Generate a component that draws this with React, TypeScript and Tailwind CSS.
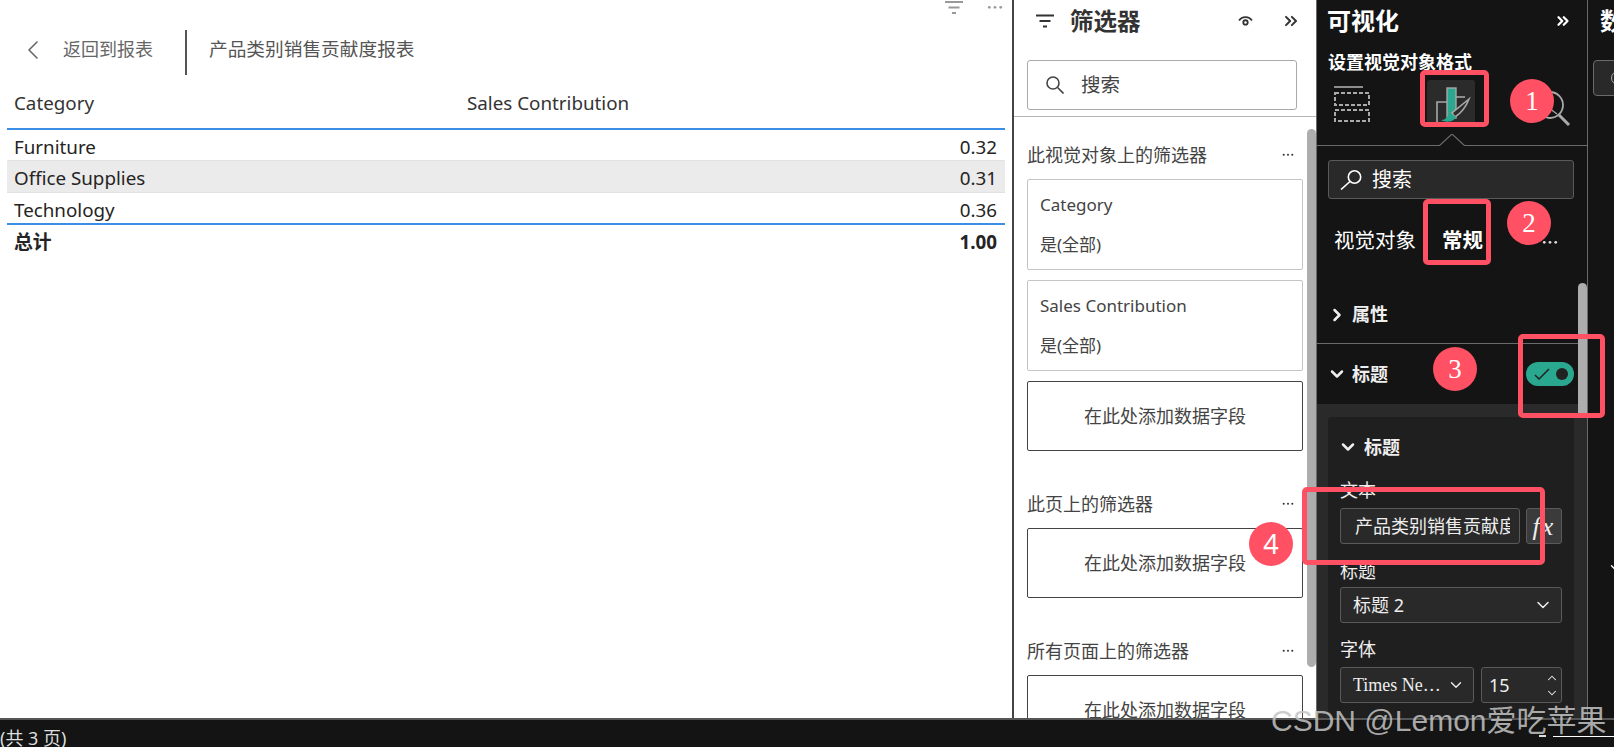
import { ChevronDown, ChevronLeft, ChevronRight, ChevronUp, ChevronsRight } from "lucide-react";

const sans = "font-['Noto_Sans','Noto_Sans_CJK_SC',sans-serif]";

function FilterLines({ className }: { className: string }) {
    return (
        <svg viewBox="0 0 18 14" className={className} fill="none" stroke="currentColor" strokeWidth="1.8">
            <path d="M0 1.5h18M3.5 7h11M7 12.5h4" />
        </svg>
    );
}

function Dots({ className }: { className: string }) {
    return (
        <svg viewBox="0 0 14 4" className={className} fill="currentColor">
            <circle cx="2" cy="2" r="1.2" />
            <circle cx="7" cy="2" r="1.2" />
            <circle cx="12" cy="2" r="1.2" />
        </svg>
    );
}

function FilterHeading({ label, className }: { label: string; className: string }) {
    return (
        <div className={`flex h-[24px] items-center justify-between pr-[22px] text-[18px] leading-[24px] text-[#444] ${className}`}>
            <span>{label}</span>
            <Dots className="w-[12px] text-[#333]" />
        </div>
    );
}

function DropField({ className = "" }: { className?: string }) {
    return (
        <div className={`flex h-[70px] w-[276px] shrink-0 items-center justify-center rounded-[2px] border border-[#444] text-[18px] text-[#444] ${className}`}>
            在此处添加数据字段
        </div>
    );
}

function FilterCard({ label }: { label: string }) {
    return (
        <div className="mb-[10px] h-[91px] w-[276px] rounded-[2px] border border-[#c4c4c4] pl-[12px] pt-[12px] text-[#444]">
            <div className="h-[40px] text-[17px] leading-[26px]">{label}</div>
            <div className="text-[17px] leading-[26px]">是(全部)</div>
        </div>
    );
}

function Field({ children, className }: { children: React.ReactNode; className: string }) {
    return (
        <div className={`flex h-[36px] items-center rounded-[3px] border border-[#5a5a5a] bg-[#292929] text-[#eee] ${className}`}>
            {children}
        </div>
    );
}

function Marker({ n, className }: { n: string; className: string }) {
    return (
        <div className={`absolute flex h-[44px] w-[44px] items-center justify-center rounded-full bg-[#ff5064] font-['Liberation_Serif',serif] text-[27px] text-white ${className}`}>
            {n}
        </div>
    );
}

function Frame({ className }: { className: string }) {
    return <div className={`absolute rounded-[5px] border-[5px] border-[#ff5064] ${className}`} />;
}

export default function App() {
    return (
        <div className={`relative flex h-[747px] w-[1614px] flex-col overflow-hidden bg-white ${sans}`}>
            <div className="flex h-[718px] shrink-0">
                {/* report canvas */}
                <div className="relative w-[1014px] shrink-0 border-r-2 border-[#444] bg-white">
                    <div className="absolute right-[9px] top-0 flex items-center gap-[24px] text-[#999]">
                        <FilterLines className="h-[15px] w-[18px]" />
                        <Dots className="w-[16px]" />
                    </div>
                    <div className="flex h-[101px] items-center pb-[2px] pl-[17px]">
                        <ChevronLeft className="h-[32px] w-[32px] text-[#666]" strokeWidth={1.2} />
                        <span className="ml-[14px] w-[122px] text-[18px] text-[#666]">返回到报表</span>
                        <div className="mt-[6px] h-[45px] w-[2px] bg-[#555]" />
                        <span className="ml-[22px] text-[18.7px] text-[#555]">产品类别销售贡献度报表</span>
                    </div>
                    <div className="ml-[7px] w-[998px] text-[18.8px] text-[#252423]">
                        <div className="grid h-[27px] grid-cols-[453px_1fr] pl-[7px] text-[#333]">
                            <span className="leading-[4px]">Category</span>
                            <span className="leading-[4px]">Sales Contribution</span>
                        </div>
                        <div className="h-[2px] bg-[#3a8ee6]" />
                        <div className="flex h-[30px] items-center justify-between pl-[7px] pr-[8px] pt-[4px]">
                            <span>Furniture</span>
                            <span>0.32</span>
                        </div>
                        <div className="flex h-[33px] items-center justify-between border-y border-[#e2e2e2] bg-[#ebebeb] pl-[7px] pr-[8px] pt-[3px]">
                            <span>Office Supplies</span>
                            <span>0.31</span>
                        </div>
                        <div className="flex h-[30px] items-center justify-between pl-[7px] pr-[8px] pt-[4px]">
                            <span>Technology</span>
                            <span>0.36</span>
                        </div>
                        <div className="h-[2px] bg-[#3a8ee6]" />
                        <div className="flex h-[33px] items-center justify-between pl-[7px] pr-[8px] pt-[2px] font-bold">
                            <span>总计</span>
                            <span>1.00</span>
                        </div>
                    </div>
                </div>

                {/* filter pane */}
                <div className="relative w-[302px] shrink-0 overflow-hidden bg-white">
                    <div className="flex h-[42px] items-center pl-[22px]">
                        <FilterLines className="h-[14px] w-[18px] text-[#333]" />
                        <span className="ml-[16px] text-[23.5px] font-bold leading-[40px] text-[#333]">筛选器</span>
                        <svg viewBox="0 0 16 12" className="ml-[97px] h-[11px] w-[15px] text-[#333]" fill="none" stroke="currentColor" strokeWidth="2">
                            <path d="M1 5c3-5 11-5 14 0" />
                            <circle cx="8" cy="7" r="2.4" />
                        </svg>
                        <ChevronsRight className="ml-[28px] h-[20px] w-[20px] text-[#333]" strokeWidth={2.4} />
                    </div>
                    <div className="mx-[13px] mt-[18px] flex h-[50px] w-[270px] items-center rounded-[3px] border border-[#aaa] pl-[18px] text-[#444]">
                        <svg viewBox="0 0 18 18" className="h-[18px] w-[18px]" fill="none" stroke="currentColor" strokeWidth="1.6">
                            <circle cx="7" cy="7" r="6" />
                            <path d="M11.5 11.5 17.5 17.5" />
                        </svg>
                        <span className="ml-[17px] text-[19.5px]">搜索</span>
                    </div>
                    <div className="mt-[6px] h-px bg-[#b5b5b5]" />
                    <div className="pl-[13px] pt-[26px]">
                        <FilterHeading label="此视觉对象上的筛选器" className="mb-[12px]" />
                        <FilterCard label="Category" />
                        <FilterCard label="Sales Contribution" />
                        <DropField />
                        <FilterHeading label="此页上的筛选器" className="mb-[12px] mt-[41px]" />
                        <DropField />
                        <FilterHeading label="所有页面上的筛选器" className="mb-[12px] mt-[41px]" />
                        <DropField />
                    </div>
                    {/* scrollbar */}
                    <div className="absolute right-0 top-[129px] h-[538px] w-[9px] rounded-full bg-[#adadad]" />
                </div>

                {/* visualizations pane */}
                <div className="relative w-[272px] shrink-0 overflow-hidden border-x border-[#6b6b6b] bg-[#141414] text-white">
                    <div className="flex h-[42px] items-center justify-between pl-[10px] pr-[15px]">
                        <span className="text-[24px] font-bold">可视化</span>
                        <ChevronsRight className="h-[18px] w-[18px]" strokeWidth={3} />
                    </div>
                    <div className="mt-[10px] pl-[11px] text-[18px] font-bold leading-[20px]">设置视觉对象格式</div>
                    <div className="relative mt-[7px] h-[67px] border-b border-[#6b6b6b]">
                        {/* build visual icon */}
                        <svg viewBox="0 0 36 36" className="absolute left-[17px] top-[7px] h-[36px] w-[36px] text-[#aaa]" fill="none" stroke="currentColor">
                            <path d="M0 1h29" strokeWidth="1.6" />
                            <rect x="1" y="7" width="34" height="12" strokeWidth="2" strokeDasharray="4 2" />
                            <rect x="1" y="24" width="34" height="11" strokeWidth="2" strokeDasharray="4 2" />
                        </svg>
                        {/* format icon */}
                        <div className="absolute left-[110px] top-[1px] h-[46px] w-[48px] rounded-[3px] bg-[#2b2b2b]">
                            <svg viewBox="0 0 48 46" className="h-[46px] w-[48px]" fill="none">
                                <path d="M10 42V22h10" stroke="#a8a8a8" strokeWidth="1.6" />
                                <rect x="20" y="8" width="9" height="30" fill="#2aa78f" stroke="#a8a8a8" strokeWidth="1.4" />
                                <path d="M29 17h9" stroke="#a8a8a8" strokeWidth="1.6" />
                                <path d="M42 19 25 33l3 4c6-4 11-10 14-18z" fill="#2b2b2b" stroke="#a8a8a8" strokeWidth="1.6" />
                                <path d="M25 34c-2 0-4 1-5 3-1 2-3 3-6 3 5 3 13 2 15-3z" fill="#2aa78f" />
                            </svg>
                        </div>
                        {/* analytics icon */}
                        <svg viewBox="0 0 36 36" className="absolute left-[218px] top-[11px] h-[36px] w-[36px] text-[#aaa]" fill="none" stroke="currentColor" strokeWidth="1.8">
                            <circle cx="15" cy="15" r="13" />
                            <path d="M24 25l10 10" strokeWidth="3" />
                            <path d="M15 4l-4 22M6 12l16 12" strokeWidth="1.2" />
                        </svg>
                        <svg viewBox="0 0 26 12" className="absolute bottom-[-1px] left-[122px] h-[12px] w-[26px]" fill="none">
                            <path d="M0 12 13 0l13 12" fill="#141414" stroke="#6b6b6b" strokeWidth="1.2" />
                        </svg>
                    </div>
                    <div className="ml-[11px] mt-[14px] flex h-[39px] w-[246px] items-center rounded-[3px] border border-[#5a5a5a] bg-[#292929] pl-[11px]">
                        <svg viewBox="0 0 22 20" className="h-[20px] w-[22px]" fill="none" stroke="currentColor" strokeWidth="1.6">
                            <circle cx="14.5" cy="7" r="6.2" />
                            <path d="M10 11.5 1 19.5" />
                        </svg>
                        <span className="ml-[10px] text-[20px]">搜索</span>
                    </div>
                    <div className="mt-[21px] flex h-[40px] items-center pl-[17px] text-[20.5px]">
                        <span>视觉对象</span>
                        <span className="ml-[26px] font-bold">常规</span>
                        <Dots className="ml-[59px] mt-[4px] w-[16px] text-[#ddd]" />
                    </div>
                    <div className="mt-[40px] flex h-[29px] items-center pl-[10px] text-[18px] font-bold text-[#eee]">
                        <ChevronRight className="h-[20px] w-[20px]" strokeWidth={3} />
                        <span className="ml-[5px]">属性</span>
                    </div>
                    <div className="mt-[14px] h-px bg-[#6b6b6b]" />
                    <div className="flex h-[60px] items-center pl-[10px] text-[18px] font-bold text-[#eee]">
                        <ChevronDown className="h-[20px] w-[20px]" strokeWidth={3} />
                        <span className="ml-[5px]">标题</span>
                        {/* toggle */}
                        <div className="ml-[138px] flex h-[24px] w-[48px] items-center justify-between rounded-full bg-[#2aa78f] pl-[8px] pr-[6px]">
                            <svg viewBox="0 0 16 12" className="h-[12px] w-[16px] text-[#222]" fill="none" stroke="currentColor" strokeWidth="1.5">
                                <path d="M1 7l4 4L15 1" />
                            </svg>
                            <div className="h-[12px] w-[12px] rounded-full bg-[#222]" />
                        </div>
                    </div>
                    <div className="h-[314px] bg-[#2a2a2a] px-[11px] pt-[13px]">
                        <div className="h-[301px] w-[246px] rounded-t-[3px] bg-[#1f1f1f] pl-[12px]">
                            <div className="flex h-[60px] items-center text-[18px] font-bold text-[#eee]">
                                <ChevronDown className="-ml-[2px] h-[20px] w-[20px]" strokeWidth={3} />
                                <span className="ml-[6px]">标题</span>
                            </div>
                            <div className="mt-[1px] h-[24px] text-[18px] leading-[24px] text-[#eee]">文本</div>
                            <div className="mt-[6px] flex gap-[6px]">
                                <Field className="w-[180px] overflow-hidden pl-[14px] pr-[9px]">
                                    <span className="block w-full overflow-hidden whitespace-nowrap text-[18px]">产品类别销售贡献度报表</span>
                                </Field>
                                <div className="flex h-[36px] w-[36px] items-center justify-center rounded-[3px] border border-[#5a5a5a] bg-[#3b3b3b] font-['Liberation_Serif',serif] text-[26px] italic tracking-[2px] text-[#eee]">
                                    fx
                                </div>
                            </div>
                            <div className="mt-[15px] h-[24px] text-[18px] leading-[24px] text-[#eee]">标题</div>
                            <Field className="mt-[4px] w-[222px] justify-between pl-[12px] pr-[8px]">
                                <span className="text-[18px]">标题 2</span>
                                <ChevronDown className="h-[20px] w-[20px]" strokeWidth={1.8} />
                            </Field>
                            <div className="mt-[14px] h-[24px] text-[18px] leading-[24px] text-[#eee]">字体</div>
                            <div className="mt-[6px] flex gap-[7px]">
                                <Field className="w-[134px] justify-between pl-[12px] pr-[8px] font-['Liberation_Serif',serif]">
                                    <span className="text-[18px]">Times Ne…</span>
                                    <ChevronDown className="h-[18px] w-[18px]" strokeWidth={1.8} />
                                </Field>
                                <Field className="w-[81px] justify-between pl-[7px] pr-[2px]">
                                    <span className="text-[18px]">15</span>
                                    <div className="flex flex-col gap-[1px]">
                                        <ChevronUp className="h-[14px] w-[14px]" strokeWidth={1.8} />
                                        <ChevronDown className="h-[14px] w-[14px]" strokeWidth={1.8} />
                                    </div>
                                </Field>
                            </div>
                        </div>
                    </div>
                    {/* scrollbar */}
                    <div className="absolute right-0 top-[283px] h-[130px] w-[9px] rounded-t-full bg-[#adadad]" />
                </div>

                {/* data pane */}
                <div className="relative w-[26px] shrink-0 overflow-hidden bg-[#141414] text-white">
                    <div className="flex h-[42px] items-center whitespace-nowrap pl-[12px] text-[24px] font-bold">数据</div>
                    <div className="ml-[5px] mt-[18px] flex h-[36px] w-[60px] items-center rounded-[4px] border border-[#6b6b6b] bg-[#292929] pl-[17px]">
                        <div className="h-[14px] w-[14px] shrink-0 rounded-full border-[1.5px] border-[#aaa]" />
                    </div>
                    <ChevronDown className="absolute left-[19px] top-[559px] h-[18px] w-[18px]" strokeWidth={1.8} />
                </div>
            </div>

            {/* status bar */}
            <div className="h-[29px] overflow-hidden border-t-2 border-[#555] bg-[#141414] text-[18px] leading-[36px] text-[#ddd]">
                (共 3 页)
                <div className="absolute left-[1539px] top-[735px] h-[2px] w-[7px] bg-[#ddd]" />
                <div className="absolute left-[1553px] top-[736px] h-px w-[61px] bg-white" />
            </div>

            {/* annotations */}
            <Frame className="left-[1420px] top-[70px] h-[57px] w-[69px]" />
            <Frame className="left-[1423px] top-[199px] h-[66px] w-[68px]" />
            <Frame className="left-[1518px] top-[334px] h-[84px] w-[87px]" />
            <Frame className="left-[1302px] top-[487px] h-[78px] w-[243px]" />
            <Marker n="1" className="left-[1510px] top-[79px]" />
            <Marker n="2" className="left-[1507px] top-[201px]" />
            <Marker n="3" className="left-[1433px] top-[347px]" />
            <Marker n="4" className={`left-[1249px] top-[522px] ${sans}`} />
            <div className="absolute left-[1271px] top-[698px] whitespace-nowrap font-['Liberation_Sans','Noto_Sans_CJK_SC',sans-serif] text-[30px] text-[#c4c4c4]/85">
                CSDN @Lemon爱吃苹果
            </div>
        </div>
    );
}
